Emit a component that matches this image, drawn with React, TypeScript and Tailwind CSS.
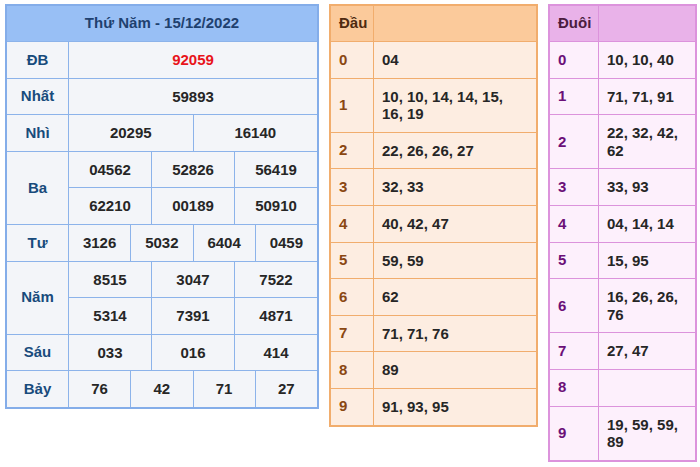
const font = { fontFamily: '"Liberation Sans", Arial, sans-serif' };

type Row = { label: string; lines: string[][]; red?: boolean };

const prizes: Row[] = [
  { label: "ĐB", lines: [["92059"]], red: true },
  { label: "Nhất", lines: [["59893"]] },
  { label: "Nhì", lines: [["20295", "16140"]] },
  {
    label: "Ba",
    lines: [
      ["04562", "52826", "56419"],
      ["62210", "00189", "50910"],
    ],
  },
  { label: "Tư", lines: [["3126", "5032", "6404", "0459"]] },
  {
    label: "Năm",
    lines: [
      ["8515", "3047", "7522"],
      ["5314", "7391", "4871"],
    ],
  },
  { label: "Sáu", lines: [["033", "016", "414"]] },
  { label: "Bảy", lines: [["76", "42", "71", "27"]] },
];

const dau = [
  "04",
  "10, 10, 14, 14, 15, 16, 19",
  "22, 26, 26, 27",
  "32, 33",
  "40, 42, 47",
  "59, 59",
  "62",
  "71, 71, 76",
  "89",
  "91, 93, 95",
];

const duoi = [
  "10, 10, 40",
  "71, 71, 91",
  "22, 32, 42, 62",
  "33, 93",
  "04, 14, 14",
  "15, 95",
  "16, 26, 26, 76",
  "27, 47",
  "",
  "19, 59, 59, 89",
];

function PrizeTable() {
  return (
    <div className="w-[314px] border-2 border-[#84ade9] bg-[#f3f5f9]">
      <div className="h-[36px] bg-[#98bff5] border-b border-[#8cb3ea] flex items-center justify-center text-[15px] font-bold text-[#1f416f]">
        Thứ Năm - 15/12/2022
      </div>
      {prizes.map((row, i) => (
        <div
          key={row.label}
          className={
            "flex " + (i < prizes.length - 1 ? "border-b border-[#8cb3ea]" : "")
          }
        >
          <div className="w-[62px] shrink-0 border-r border-[#8cb3ea] flex items-center justify-center text-[15px] font-bold text-[#184b7c]">
            {row.label}
          </div>
          <div className="flex-1 flex flex-col">
            {row.lines.map((line, j) => (
              <div
                key={j}
                className={
                  "flex " +
                  (j < row.lines.length - 1 ? "border-b border-[#8cb3ea]" : "")
                }
              >
                {line.map((n, k) => (
                  <div
                    key={k}
                    className={
                      "flex-1 basis-0 text-center py-[9px] leading-[17.6px] text-[15px] font-bold " +
                      (k > 0 ? "border-l border-[#8cb3ea] " : "") +
                      (row.red ? "text-[#e8141b]" : "text-[#262626]")
                    }
                  >
                    {n}
                  </div>
                ))}
              </div>
            ))}
          </div>
        </div>
      ))}
    </div>
  );
}

function LotoTable({
  title,
  values,
  width,
  labelWidth,
  border,
  headBg,
  cellBg,
  titleColor,
  labelColor,
}: {
  title: string;
  values: string[];
  width: string;
  labelWidth: string;
  border: string;
  headBg: string;
  cellBg: string;
  titleColor: string;
  labelColor: string;
}) {
  return (
    <div className={`${width} border-2 ${border} ${cellBg} self-start`}>
      <div className={`flex h-[36px] border-b ${border} ${headBg}`}>
        <div
          className={`${labelWidth} shrink-0 border-r ${border} flex items-center pl-[8px] text-[15px] font-bold ${titleColor}`}
        >
          {title}
        </div>
        <div className="flex-1" />
      </div>
      {values.map((v, i) => (
        <div
          key={i}
          className={"flex " + (i < values.length - 1 ? `border-b ${border}` : "")}
        >
          <div
            className={`${labelWidth} shrink-0 border-r ${border} flex items-center pl-[8px] text-[15px] font-bold ${labelColor}`}
          >
            {i}
          </div>
          <div className="flex-1 pl-[8px] pr-[14px] py-[9px] leading-[17.6px] min-h-[35.6px] text-[15px] font-bold text-[#262626]">
            {v}
          </div>
        </div>
      ))}
    </div>
  );
}

export default function App() {
  return (
    <div className="bg-white w-[700px] h-[467px] pt-[4px] pl-[5px] flex items-start gap-[10px]" style={font}>
      <PrizeTable />
      <LotoTable
        title="Đầu"
        values={dau}
        width="w-[209px]"
        labelWidth="w-[43px]"
        border="border-[#f1ad6d]"
        headBg="bg-[#fbca9b]"
        cellBg="bg-[#fdede1]"
        titleColor="text-[#4f2a10]"
        labelColor="text-[#8a4712]"
      />
      <LotoTable
        title="Đuôi"
        values={duoi}
        width="w-[149px]"
        labelWidth="w-[49px]"
        border="border-[#dc93dc]"
        headBg="bg-[#e9b2e9]"
        cellBg="bg-[#fdf0fc]"
        titleColor="text-[#4b1c3f]"
        labelColor="text-[#6b0f78]"
      />
    </div>
  );
}
